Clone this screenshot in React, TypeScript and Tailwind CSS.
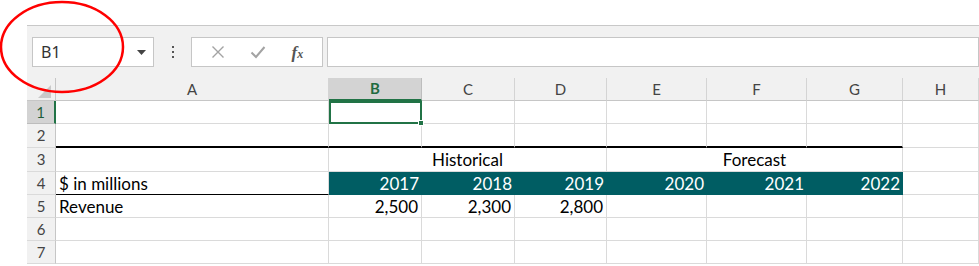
import React from 'react'

const cols = ['A', 'B', 'C', 'D', 'E', 'F', 'G', 'H']
const years = ['2017', '2018', '2019', '2020', '2021', '2022']
const font = { fontFamily: "Lato, 'Noto Sans', sans-serif" }

function Cell({ className = '', h = 'h-[23px]', children }: { className?: string; h?: string; children?: React.ReactNode }) {
    return (
        <div className={`${h} border-b border-r border-[#dadada] flex items-center text-[17px] leading-none text-black ${className}`}>
            {children}
        </div>
    )
}

function RowHead({ n, active, h = 'h-[23px]' }: { n: number; active?: boolean; h?: string }) {
    return (
        <div
            className={`${h} flex items-center justify-center border-b text-[15px] ${
                active
                    ? 'bg-[#d3d3d3] border-[#bdbdbd] border-r-2 border-r-[#217346] text-[#1f5e3a]'
                    : 'bg-[#f1f1f1] border-[#dadada] border-r border-r-[#c6c6c6] text-[#444]'
            }`}
        >
            {n}
        </div>
    )
}

export default function App() {
    return (
        <div className="relative w-[979px] h-[266px] bg-white overflow-hidden" style={font}>
            <div className="h-[25px]" />

            {/* formula bar */}
            <div className="ml-[27px] h-[53px] border-t border-[#c8c8c8] bg-[#f1f1f1] flex items-start pt-[11px]">
                <div className="ml-[5px] w-[122px] h-[30px] bg-white border border-[#c6c6c6] flex items-center justify-between pl-[8px] pr-[7px]">
                    <span className="text-[16px] text-[#333]" style={{ fontFamily: "'Noto Sans', sans-serif" }}>B1</span>
                    <svg width="9" height="5" viewBox="0 0 9 5"><path d="M0 0h9L4.5 5z" fill="#444" /></svg>
                </div>
                <div className="w-[37px] h-[30px] flex flex-col items-center justify-center gap-[3px]">
                    <span className="w-[2px] h-[2px] bg-[#555]" />
                    <span className="w-[2px] h-[2px] bg-[#555]" />
                    <span className="w-[2px] h-[2px] bg-[#555]" />
                </div>
                <div className="w-[132px] h-[30px] bg-white border border-[#c6c6c6] flex items-center justify-around px-[6px]">
                    <svg width="14" height="14" viewBox="0 0 14 14"><path d="M1.5 1.5l11 11M12.5 1.5l-11 11" stroke="#a3a3a3" strokeWidth="1.4" /></svg>
                    <svg width="16" height="14" viewBox="0 0 16 14"><path d="M1.5 7.5l4.5 4.5L14.5 2" stroke="#a3a3a3" strokeWidth="2" fill="none" /></svg>
                    <span className="italic text-[#555] leading-none" style={{ fontFamily: "'Liberation Serif', serif" }}>
                        <span className="text-[17px] font-bold">f</span><span className="text-[12px] font-bold">x</span>
                    </span>
                </div>
                <div className="ml-[4px] flex-1 h-[30px] bg-white border border-[#c6c6c6]" />
            </div>

            {/* grid */}
            <div className="ml-[27px] grid grid-cols-[29px_273px_93px_93px_92px_100px_100px_96px_1fr]">
                {/* header row */}
                <div className="h-[23px] bg-[#f1f1f1] border-r border-b border-[#c6c6c6] flex items-end justify-end pr-[4px] pb-[2px]">
                    <svg width="13" height="13" viewBox="0 0 13 13"><path d="M13 0v13H0z" fill="#c9c9c9" /></svg>
                </div>
                {cols.map((c) =>
                    c === 'B' ? (
                        <div key={c} className="h-[23px] bg-[#d3d3d3] border-r border-[#bdbdbd] border-b-2 border-b-[#217346] flex items-center justify-center text-[15px] font-bold text-[#1f6b40]">
                            {c}
                        </div>
                    ) : (
                        <div key={c} className="h-[23px] bg-[#f1f1f1] border-r border-[#d4d4d4] border-b border-b-[#c6c6c6] flex items-center justify-center text-[15px] text-[#444]">
                            {c}
                        </div>
                    )
                )}

                {/* row 1 */}
                <RowHead n={1} active />
                <Cell />
                <div className="relative h-[23px] border-2 border-[#217346]">
                    <span className="absolute right-[-4px] bottom-[-4px] w-[6px] h-[6px] bg-[#217346] border border-white" />
                </div>
                <Cell /><Cell /><Cell /><Cell /><Cell /><Cell />

                {/* row 2 */}
                <RowHead n={2} h="h-[24px]" />
                {['A', 'B', 'C', 'D', 'E', 'F', 'G'].map((c) => (
                    <Cell key={c} h="h-[24px]" className="border-b-2 border-b-black" />
                ))}
                <Cell h="h-[24px]" />

                {/* row 3 */}
                <RowHead n={3} h="h-[24px]" />
                <Cell h="h-[24px]" />
                <Cell h="h-[24px]" className="col-span-3 justify-center">Historical</Cell>
                <Cell h="h-[24px]" className="col-span-3 justify-center">Forecast</Cell>
                <Cell h="h-[24px]" />

                {/* row 4 */}
                <RowHead n={4} />
                <Cell className="border-b-black pl-[3px]">$ in millions</Cell>
                {years.map((y) => (
                    <div key={y} className="h-[23px] bg-[#005d63] flex items-center justify-end pr-[3px] text-[17px] leading-none text-white">
                        {y}
                    </div>
                ))}
                <Cell />

                {/* row 5 */}
                <RowHead n={5} />
                <Cell className="pl-[3px]">Revenue</Cell>
                <Cell className="justify-end pr-[3px]">2,500</Cell>
                <Cell className="justify-end pr-[3px]">2,300</Cell>
                <Cell className="justify-end pr-[3px]">2,800</Cell>
                <Cell /><Cell /><Cell /><Cell />

                {[6, 7].map((n) => (
                    <React.Fragment key={n}>
                        <RowHead n={n} />
                        <Cell /><Cell /><Cell /><Cell /><Cell /><Cell /><Cell /><Cell />
                    </React.Fragment>
                ))}
            </div>

            {/* red annotation circle */}
            <svg className="absolute left-0 top-0 pointer-events-none" width="140" height="100">
                <ellipse cx="62" cy="47" rx="61" ry="45" fill="none" stroke="#f00" strokeWidth="2.5" />
            </svg>
        </div>
    )
}
